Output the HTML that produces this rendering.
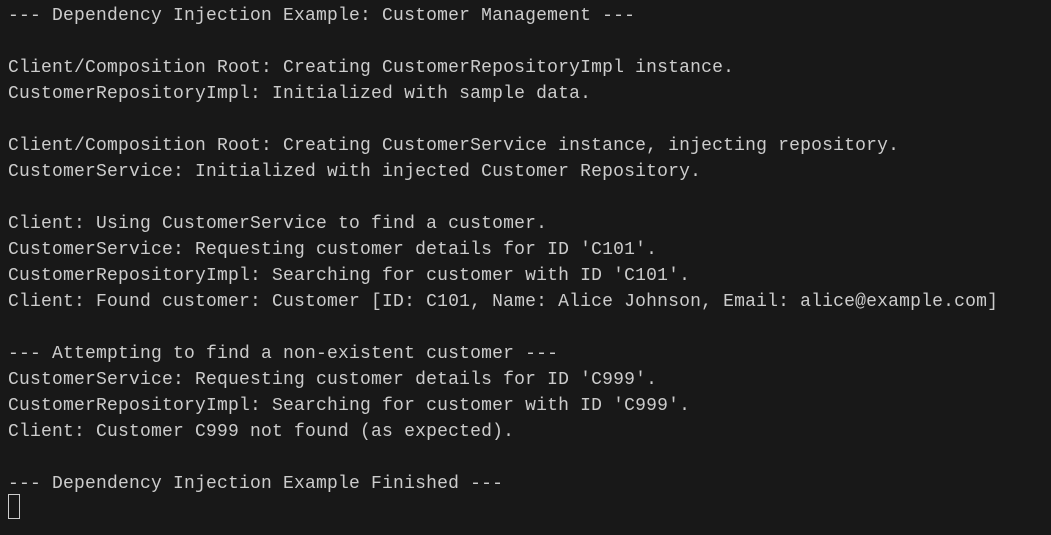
<!DOCTYPE html>
<html><head><style>
html,body{margin:0;padding:0;background:#181818;width:1051px;height:535px;overflow:hidden}
pre{margin:0;position:absolute;left:8px;top:3px;font-family:"Liberation Mono",monospace;font-size:18px;letter-spacing:0.2px;line-height:26px;color:#cccccc}
.cur{position:absolute;left:8px;top:494px;width:10px;height:23px;border:1px solid #cccccc}
</style></head><body>
<pre>--- Dependency Injection Example: Customer Management ---

Client/Composition Root: Creating CustomerRepositoryImpl instance.
CustomerRepositoryImpl: Initialized with sample data.

Client/Composition Root: Creating CustomerService instance, injecting repository.
CustomerService: Initialized with injected Customer Repository.

Client: Using CustomerService to find a customer.
CustomerService: Requesting customer details for ID 'C101'.
CustomerRepositoryImpl: Searching for customer with ID 'C101'.
Client: Found customer: Customer [ID: C101, Name: Alice Johnson, Email: alice@example.com]

--- Attempting to find a non-existent customer ---
CustomerService: Requesting customer details for ID 'C999'.
CustomerRepositoryImpl: Searching for customer with ID 'C999'.
Client: Customer C999 not found (as expected).

--- Dependency Injection Example Finished ---</pre>
<div class="cur"></div>
</body></html>
